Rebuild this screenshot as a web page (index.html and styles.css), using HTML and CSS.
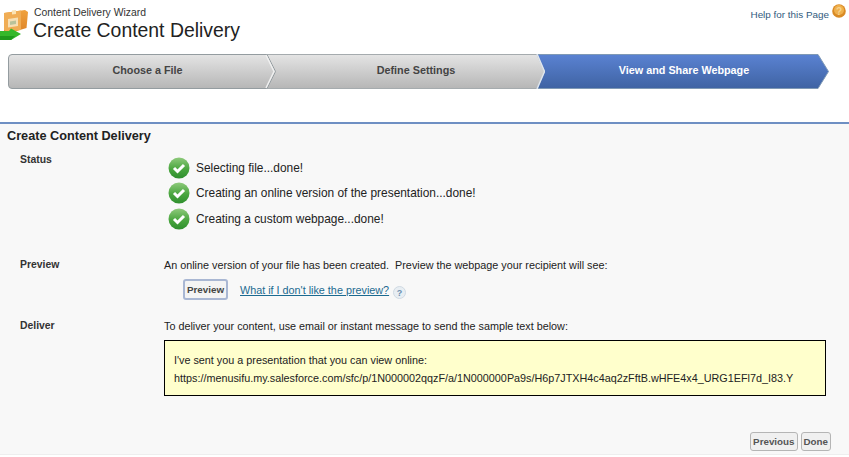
FILE: index.html
```html
<!DOCTYPE html>
<html lang="en">
<head>
  <meta charset="UTF-8" />
  <title>Create Content Delivery</title>
  <link rel="stylesheet" href="styles.css">
</head>
<body>
  <header class="page-header">
    <svg class="wizard-icon" width="30" height="32" viewBox="0 0 30 32">
      <defs>
        <linearGradient id="boxSide" x1="0" y1="0" x2="0" y2="1"><stop offset="0" stop-color="#f0a23e"/><stop offset="1" stop-color="#dd8326"/></linearGradient>
      </defs>
      <path d="M4 4 L25 1 L28 3 L26.500 19 L10 24 L4 22 Z" fill="url(#boxSide)"/>
      <path d="M4 4 L21 1.500 L21 21 L7 23 L4 21 Z" fill="#f0ad55"/>
      <path d="M8 10 L18 8.500 L18 17 L8 18.500 Z" fill="#f6dfb4"/>
      <path d="M10 12.500 L16 11.500 L16 15 L10 16 Z" fill="#b9c29a"/>
      <path d="M12 1.500 L16 1 L16 5 L12 5.500 Z" fill="#fbe3b4"/>
      <path d="M0 22 L9 22 L11 19.500 L21 25 L11 31 L0 31 Z" fill="#35b82a"/>
      <path d="M0 27 L15 27 L11 31 L0 31 Z" fill="#1f9a1c"/>
    </svg>
    <div class="titles">
      <div class="wizard-name">Content Delivery Wizard</div>
      <h1>Create Content Delivery</h1>
    </div>
    <a class="help-top" href="#">
      <span>Help for this Page</span>
      <svg width="14" height="14" viewBox="0 0 14 14"><circle cx="7" cy="7" r="6.800" fill="#d98a24"/><circle cx="7" cy="6" r="5" fill="#efb04c"/><text x="7" y="10.500" text-anchor="middle" class="help-q">?</text></svg>
    </a>
  </header>

  <div class="stepper">
    <div class="step step-first">
      <svg class="step-bg" viewBox="0 0 268 35" preserveAspectRatio="none">
        <defs><linearGradient id="grayStep" x1="0" y1="0" x2="0" y2="1"><stop offset="0" stop-color="#e4e4e4"/><stop offset="1" stop-color="#b6b6b6"/></linearGradient></defs>
        <path d="M4 .5 H259 L267.500 17.500 L259 34.500 H4 Q.5 34.500 .5 31 V4 Q.5 .5 4 .5 Z" fill="url(#grayStep)" stroke="#949ca0"/>
        <path d="M258 1 L266 17.500 L258 34" fill="none" stroke="#f0f0f0" stroke-width="1.500"/>
      </svg>
      <span>Choose a File</span>
    </div>
    <div class="step step-mid">
      <svg class="step-bg" viewBox="0 0 279 35" preserveAspectRatio="none">
        <path d="M0 .5 H271 L278.500 17.500 L271 34.500 H0 Z" fill="url(#grayStep)" stroke="#a5abae"/>
        <path d="M271 0 L278.500 17.500 L271 35" fill="none" stroke="#dfe6ee" stroke-width="1.500"/>
      </svg>
      <span>Define Settings</span>
    </div>
    <div class="step step-active">
      <svg class="step-bg" viewBox="0 0 292 35" preserveAspectRatio="none">
        <defs><linearGradient id="blueStep" x1="0" y1="0" x2="0" y2="1"><stop offset="0" stop-color="#5a82d2"/><stop offset="1" stop-color="#3f63a3"/></linearGradient></defs>
        <path d="M0 .5 H281 L291.500 17.500 L281 34.500 H0 Z" fill="url(#blueStep)" stroke="#7f99b5"/>
      </svg>
      <span>View and Share Webpage</span>
    </div>
  </div>

  <main class="panel">
    <h2>Create Content Delivery</h2>

    <section class="row row-status">
      <div class="label">Status</div>
      <ul class="status-list">
        <li><svg class="check" width="22" height="22" viewBox="0 0 22 22"><use href="#checkIcon"/></svg>Selecting file...done!</li>
        <li><svg class="check" width="22" height="22" viewBox="0 0 22 22"><use href="#checkIcon"/></svg>Creating an online version of the presentation...done!</li>
        <li><svg class="check" width="22" height="22" viewBox="0 0 22 22"><use href="#checkIcon"/></svg>Creating a custom webpage...done!</li>
      </ul>
    </section>

    <section class="row row-preview">
      <div class="label">Preview</div>
      <div>
        <p>An online version of your file has been created.&nbsp; Preview the webpage your recipient will see:</p>
        <div class="preview-actions">
          <button class="btn-preview">Preview</button>
          <a class="link" href="#">What if I don't like the preview?</a>
          <svg class="q-icon" width="13" height="13" viewBox="0 0 13 13"><circle cx="6.500" cy="6.500" r="6" fill="#e8eef3" stroke="#cfd9e2"/><text x="6.500" y="10" text-anchor="middle" class="q-mark">?</text></svg>
        </div>
      </div>
    </section>

    <section class="row row-deliver">
      <div class="label">Deliver</div>
      <div>
        <p>To deliver your content, use email or instant message to send the sample text below:</p>
        <div class="sample">
          I've sent you a presentation that you can view online:<br>
          https://menusifu.my.salesforce.com/sfc/p/1N000002qqzF/a/1N000000Pa9s/H6p7JTXH4c4aq2zFftB.wHFE4x4_URG1EFl7d_I83.Y
        </div>
      </div>
    </section>

    <div class="footer-btns">
      <button>Previous</button>
      <button>Done</button>
    </div>
  </main>

  <svg width="0" height="0" class="defs">
    <defs>
      <linearGradient id="checkFill" x1="0" y1="0" x2="0" y2="1"><stop offset="0" stop-color="#8fca7c"/><stop offset=".55" stop-color="#4aa63f"/><stop offset="1" stop-color="#2f8f2e"/></linearGradient>
      <g id="checkIcon">
        <circle cx="11" cy="11" r="10.500" fill="url(#checkFill)"/>
        <path d="M6 11 L9.500 14.500 L16 8" fill="none" stroke="#fff" stroke-width="3"/>
      </g>
    </defs>
  </svg>
</body>
</html>
```

FILE: styles.css
```css
body {
  margin: 0;
  font-family: "Liberation Sans", Arial, sans-serif;
  font-size: 10.800px;
  line-height: 14px;
  color: #222;
  background: #fff;
}
.defs {
  display: block;
  height: 0;
}
.page-header {
  display: flex;
  height: 54px;
  box-sizing: border-box;
}
.wizard-icon {
  margin-top: 9px;
  flex: none;
}
.titles {
  margin-left: 3px;
  padding-top: 7px;
}
.wizard-name {
  margin-left: 1px;
  font-size: 10.400px;
  line-height: 12px;
  color: #333;
}
h1 {
  margin: 0;
  font-size: 19.400px;
  line-height: 22px;
  font-weight: normal;
  color: #222;
}
.help-top {
  margin-left: auto;
  margin-right: 3px;
  padding-top: 4px;
  font-size: 9.900px;
  color: #315a7d;
  text-decoration: none;
  display: flex;
  gap: 3px;
  align-items: flex-start;
}
.help-top span {
  margin-top: 4px;
}
.help-q {
  font: bold 10px "Liberation Sans", sans-serif;
  fill: #f7d48e;
}
.stepper {
  display: flex;
  height: 35px;
  margin-left: 8px;
}
.step {
  position: relative;
  display: flex;
  align-items: center;
  justify-content: center;
  box-sizing: border-box;
  padding-bottom: 4px;
  font-size: 10.800px;
  font-weight: bold;
  color: #444;
}
.step span {
  position: relative;
}
.step-bg {
  position: absolute;
  top: 0;
  left: 0;
  width: 100%;
  height: 100%;
}
.step-first {
  width: 268px;
  padding-left: 11px;
  z-index: 3;
}
.step-mid {
  width: 279px;
  margin-left: -10px;
  padding-left: 21px;
  z-index: 2;
}
.step-active {
  width: 292px;
  margin-left: -8px;
  padding-left: 2px;
  color: #fff;
  z-index: 1;
}
.panel {
  margin-top: 33px;
  height: 333px;
  box-sizing: border-box;
  border-top: 2px solid #6e8fc3;
  border-bottom: 1px solid #eee;
  background: #f8f8f8;
  padding: 5px 0 0 0;
  position: relative;
}
h2 {
  margin: 0 0 0 7px;
  font-size: 12.700px;
  line-height: 15px;
  font-weight: bold;
  color: #222;
}
.row {
  display: grid;
  grid-template-columns: 164px 1fr;
}
.label {
  padding-left: 20px;
  font-size: 10.400px;
  font-weight: bold;
  color: #333;
}
p {
  margin: 0;
}
.row-status {
  margin-top: 9px;
}
.status-list {
  list-style: none;
  margin: 0;
  padding: 2px 0 0 4px;
  font-size: 11.900px;
}
.status-list li {
  display: flex;
  align-items: center;
  height: 25.500px;
  gap: 6px;
}
.row-preview {
  margin-top: 26px;
}
.preview-actions {
  display: flex;
  align-items: center;
  margin: 8px 0 0 19px;
  height: 20px;
}
.btn-preview {
  width: 45px;
  height: 21px;
  padding: 0;
  font: bold 9.800px "Liberation Sans", sans-serif;
  color: #444;
  background: #f4f4f4;
  border: 2px solid #a9b7d3;
  border-radius: 3px;
}
.link {
  margin-left: 12px;
  color: #1b6a90;
}
.q-icon {
  margin: 5px 0 0 4px;
}
.q-mark {
  font: bold 9px "Liberation Sans", sans-serif;
  fill: #6d8fb0;
}
.row-deliver {
  margin-top: 19px;
}
.sample {
  margin-top: 7px;
  width: 662px;
  height: 56px;
  box-sizing: border-box;
  border: 1px solid #000;
  background: #ffc;
  padding: 10px 9px 0;
  line-height: 18px;
  white-space: nowrap;
}
.footer-btns {
  position: absolute;
  right: 18px;
  bottom: 3px;
  display: flex;
  gap: 3px;
}
.footer-btns button {
  height: 19px;
  padding: 0 2px;
  font: bold 9.800px "Liberation Sans", sans-serif;
  color: #555;
  background: #f0f0f0;
  border: 1px solid #b5b5b5;
  border-radius: 3px;
}
```
